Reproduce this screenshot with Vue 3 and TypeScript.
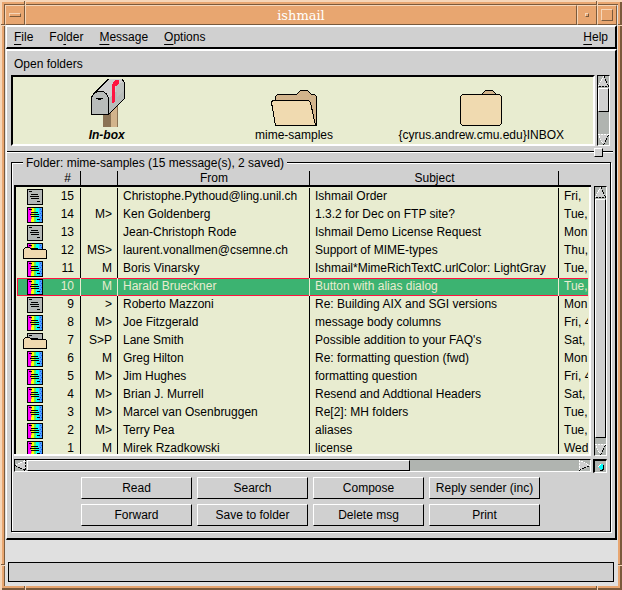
<script setup lang="ts">
import { ref } from 'vue'

interface Message {
  id: number
  icon: 'plain' | 'rich' | 'savedRich' | 'savedPlain'
  flags: string
  from: string
  subject: string
  date: string
}

const menus = [
  { before: '', key: 'F', after: 'ile' },
  { before: 'Fo', key: 'l', after: 'der' },
  { before: '', key: 'M', after: 'essage' },
  { before: '', key: 'O', after: 'ptions' },
  { before: '', key: 'H', after: 'elp' },
]

const messages: Message[] = [
  { id: 15, icon: 'plain', flags: '', from: 'Christophe.Pythoud@ling.unil.ch', subject: 'Ishmail Order', date: 'Fri,' },
  { id: 14, icon: 'rich', flags: 'M>', from: 'Ken Goldenberg', subject: '1.3.2 for Dec on FTP site?', date: 'Tue,' },
  { id: 13, icon: 'plain', flags: '', from: 'Jean-Christoph Rode', subject: 'Ishmail Demo License Request', date: 'Mon' },
  { id: 12, icon: 'savedRich', flags: 'MS>', from: 'laurent.vonallmen@csemne.ch', subject: 'Support of MIME-types', date: 'Thu,' },
  { id: 11, icon: 'rich', flags: 'M', from: 'Boris Vinarsky', subject: 'Ishmail*MimeRichTextC.urlColor: LightGray', date: 'Tue,' },
  { id: 10, icon: 'rich', flags: 'M', from: 'Harald Brueckner', subject: 'Button with alias dialog', date: 'Tue,' },
  { id: 9, icon: 'plain', flags: '>', from: 'Roberto Mazzoni', subject: 'Re: Building AIX and SGI versions', date: 'Mon' },
  { id: 8, icon: 'rich', flags: 'M>', from: 'Joe Fitzgerald', subject: 'message body columns', date: 'Fri, 4' },
  { id: 7, icon: 'savedPlain', flags: 'S>P', from: 'Lane Smith', subject: "Possible addition to your FAQ's", date: 'Sat,' },
  { id: 6, icon: 'rich', flags: 'M', from: 'Greg Hilton', subject: 'Re: formatting question (fwd)', date: 'Mon' },
  { id: 5, icon: 'rich', flags: 'M>', from: 'Jim Hughes', subject: 'formatting question', date: 'Fri, 4' },
  { id: 4, icon: 'rich', flags: 'M>', from: 'Brian J. Murrell', subject: 'Resend and Addtional Headers', date: 'Sat,' },
  { id: 3, icon: 'rich', flags: 'M>', from: 'Marcel van Osenbruggen', subject: 'Re[2]: MH folders', date: 'Tue,' },
  { id: 2, icon: 'rich', flags: 'M>', from: 'Terry Pea', subject: 'aliases', date: 'Tue,' },
  { id: 1, icon: 'rich', flags: 'M', from: 'Mirek Rzadkowski', subject: 'license', date: 'Wed' },
]

const actions = ['Read', 'Search', 'Compose', 'Reply sender (inc)', 'Forward', 'Save to folder', 'Delete msg', 'Print']
const selected = ref(10)
</script>

<template>
  <div class="window">
    <i class="tick v top left"></i><i class="tick v top right"></i>
    <i class="tick v bottom left"></i><i class="tick v bottom right"></i>
    <i class="tick h up west"></i><i class="tick h up east"></i>
    <i class="tick h down west"></i><i class="tick h down east"></i>

    <header class="titlebar">
      <button class="wm" aria-label="Window menu"><span class="glyph dash"></span></button>
      <h1 class="title">ishmail</h1>
      <button class="wm" aria-label="Minimize"><span class="glyph dot"></span></button>
      <button class="wm" aria-label="Maximize"><span class="glyph square"></span></button>
    </header>

    <nav class="menubar">
      <button v-for="m in menus" :key="m.key" class="menu">{{ m.before }}<span class="mnemonic">{{ m.key }}</span>{{ m.after }}</button>
    </nav>

    <main class="panel">
      <h2 class="label">Open folders</h2>
      <div class="folders">
        <div class="folder-view">
          <button class="folder current">
            <svg width="36" height="48" viewBox="-2 0 36 48" shape-rendering="crispEdges">
              <path d="M12 34h8v14h-8z" fill="#8b7355" />
              <path d="M20 30l7-5v23h-7z" fill="#d2b48c" />
              <path d="M26 25h1v23h-1z" fill="#8b7355" />
              <path d="M1 16L17 0H31L34 4V19L18 35H1z" fill="#b8bcba" />
              <path d="M3 14L17 0H31L33 4L18 20L16 15L13 13H6z" fill="#cfcfcf" />
              <path d="M25 7l8-5v9l-7 7z" fill="#bfc3c0" />
              <path d="M0.500 35.500V18L4 13.500L7 12.500H12L15.500 15L17.500 19V35.500z" fill="#b8bcba" stroke="#000" />
              <path d="M2.500 15L17.500 0M31.500 0.500L33.500 4V19.500L17.500 35.500" fill="none" stroke="#000" />
              <path d="M5 19h7v1H5zM7 20h3v1H7z" />
              <path d="M21 5h1V3h1V2h1V1h4v4h-1v1h-1v1h-2v16h-1v1h-2z" fill="#ff1440" />
            </svg>
            <span>In-box</span>
          </button>
          <button class="folder">
            <svg width="48" height="48" viewBox="0 0 48 48" shape-rendering="crispEdges">
              <path d="M5.500 46V17.500L7.500 15.500H26.500L30.500 11.500H37.500L41.500 15.500H44.500L46.500 17.500V46.500z" fill="#d2b48c" stroke="#000" />
              <path d="M1.500 23.500L2.500 21.500H38.500L40.500 23.500L45.500 46.500H5.500z" fill="#f0dab0" stroke="#000" />
            </svg>
            <span>mime-samples</span>
          </button>
          <button class="folder">
            <svg width="44" height="48" viewBox="0 0 44 48" shape-rendering="crispEdges">
              <path d="M22.500 15.500L26.500 11.500H33.500L37.500 15.500z" fill="#d2b48c" stroke="#000" />
              <path d="M3.500 15.500H40.500L42.500 17.500V44.500L40.500 46.500H3.500L1.500 44.500V17.500z" fill="#f0dab0" stroke="#000" />
            </svg>
            <span>{cyrus.andrew.cmu.edu}INBOX</span>
          </button>
        </div>
        <div class="scroll vertical">
          <button class="arrow" aria-label="Scroll folders up">
            <svg width="11" height="11" viewBox="0 0 11 11" shape-rendering="crispEdges"><path d="M5 0h1L11 10H0z" fill="#d0d0d0" /><path d="M5.500 0L0.500 10" stroke="#fff" stroke-dasharray="1 1" /><path d="M6 0l4.500 10H0" fill="none" stroke="#000" stroke-dasharray="2 1" /></svg>
          </button>
          <div class="thumb short"></div>
          <div class="trough"></div>
          <button class="arrow" aria-label="Scroll folders down">
            <svg width="11" height="11" viewBox="0 0 11 11" shape-rendering="crispEdges"><path d="M0 0h11L6 10H5z" fill="#d0d0d0" /><path d="M11 0.500H0.500L5 10" fill="none" stroke="#fff" stroke-dasharray="2 1" /><path d="M10.500 1L5.500 11" stroke="#000" stroke-dasharray="2 1" /></svg>
          </button>
        </div>
      </div>

      <div class="sash"><span class="grip"></span></div>

      <section class="group">
        <h2 class="group-title">Folder: mime-samples (15 message(s), 2 saved)</h2>
        <div class="list">
          <div class="list-view">
            <table>
              <colgroup><col class="c-num"><col class="c-flags"><col class="c-from"><col><col class="c-date"></colgroup>
              <thead>
                <tr><th class="num">#</th><th></th><th>From</th><th>Subject</th><th></th></tr>
              </thead>
              <tbody>
                <tr v-for="m in messages" :key="m.id" :class="{ selected: m.id === selected }" @click="selected = m.id">
                  <td>
                    <div class="cell-num">
                      <svg width="24" height="16" viewBox="0 0 24 16" shape-rendering="crispEdges">
                        <rect x="4.500" y="0.500" width="15" height="15" fill="#b4b8b6" stroke="#000" />
                        <template v-if="m.icon === 'rich' || m.icon === 'savedRich'">
                          <path d="M5 1h3v14H5z" fill="#ff00ff" />
                          <path d="M8 1h3v14H8z" fill="#ffff00" />
                          <path d="M8 2h1v2H8zM8 6h1v2H8zM8 10h1v2H8z" fill="#ff8040" />
                          <path d="M11 1h2v14h-2z" fill="#60f060" />
                          <path d="M13 1h3v14h-3z" fill="#00ffff" />
                          <path d="M16 1h3v14h-3z" fill="#4aa8ff" />
                          <path d="M17 2h1v1h-1zM18 4h1v1h-1zM17 6h1v1h-1zM18 8h1v1h-1zM17 10h1v1h-1zM18 12h1v1h-1z" fill="#2050ff" />
                        </template>
                        <path d="M6 2h3v1H6zM8 5h7v1H8zM7 7h9v1H7zM8 9h8v1H8zM14 12h3v1h-3z" />
                        <path v-if="m.icon.startsWith('saved')" d="M0.500 6.500L2.500 4.500H6.500L8.500 6.500H22L23.500 7.500V15.500H0.500z" fill="#f0dab0" stroke="#000" />
                      </svg>
                      <span>{{ m.id }}</span>
                    </div>
                  </td>
                  <td class="flags">{{ m.flags }}</td>
                  <td>{{ m.from }}</td>
                  <td>{{ m.subject }}</td>
                  <td>{{ m.date }}</td>
                </tr>
              </tbody>
            </table>
          </div>
          <div class="scroll vertical list-scroll">
            <button class="arrow" aria-label="Scroll messages up">
              <svg width="11" height="11" viewBox="0 0 11 11" shape-rendering="crispEdges"><path d="M5 0h1L11 10H0z" fill="#d0d0d0" /><path d="M5.500 0L0.500 10" stroke="#fff" stroke-dasharray="1 1" /><path d="M6 0l4.500 10H0" fill="none" stroke="#000" stroke-dasharray="2 1" /></svg>
            </button>
            <div class="thumb long"></div>
            <div class="trough"></div>
            <button class="arrow" aria-label="Scroll messages down">
              <svg width="11" height="11" viewBox="0 0 11 11" shape-rendering="crispEdges"><path d="M0 0h11L6 10H5z" fill="#d0d0d0" /><path d="M11 0.500H0.500L5 10" fill="none" stroke="#fff" stroke-dasharray="2 1" /><path d="M10.500 1L5.500 11" stroke="#000" stroke-dasharray="2 1" /></svg>
            </button>
          </div>
          <div class="scroll horizontal">
            <button class="arrow" aria-label="Scroll messages left">
              <svg width="11" height="11" viewBox="0 0 11 11" shape-rendering="crispEdges"><path d="M0 5h1L11 0V11z" fill="#d0d0d0" /><path d="M0 5.500L10.500 0.500" stroke="#fff" stroke-dasharray="2 1" /><path d="M0 5.500L10.500 10.500V0" fill="none" stroke="#000" stroke-dasharray="2 1" /></svg>
            </button>
            <div class="thumb wide"></div>
            <div class="trough"></div>
            <button class="arrow" aria-label="Scroll messages right">
              <svg width="11" height="11" viewBox="0 0 11 11" shape-rendering="crispEdges"><path d="M0 0L11 5v1L0 11z" fill="#d0d0d0" /><path d="M0.500 11V0.500L11 5.500" fill="none" stroke="#fff" stroke-dasharray="2 1" /><path d="M0 10.500L11 5.500" stroke="#000" stroke-dasharray="2 1" /></svg>
            </button>
          </div>
          <button class="plug" aria-label="Lock position">
            <svg width="8" height="8" viewBox="0 0 8 8" shape-rendering="crispEdges"><path d="M5 2h2v5H6v1H3V7h2z" /><path d="M3 1h3v5H5v1H4V6H3V5H2V4H1V3h1V2h1z" fill="#00ffff" /><path d="M1 3h1V2h1V1h1v1H3v1H2v1H1z" fill="#fff" /></svg>
          </button>
        </div>
        <div class="actions">
          <button v-for="a in actions" :key="a" class="action">{{ a }}</button>
        </div>
      </section>
    </main>

    <div class="status" role="status"></div>
  </div>
</template>

<style>
body {
  margin: 0;
}
</style>

<style scoped>
.window {
  --gray: #d0d0d0;
  --cream: #e8ecd0;
  --orange: #e8a670;
  --brown: #7a5a3c;
  --peach: #f6d6b8;
  --trough: #b0b4b0;
  position: relative;
  box-sizing: border-box;
  display: flex;
  flex-direction: column;
  height: 100vh;
  min-height: 420px;
  padding: 5px 5px 4px;
  background: #e0e0e0;
  box-shadow:
    inset 2px 2px var(--peach),
    inset -2px -2px var(--brown),
    inset 4px 4px var(--orange),
    inset -4px -4px var(--orange),
    inset 5px 5px var(--brown);
  font: 12px/18px "Liberation Sans", Arial, sans-serif;
  color: #000;
}

button {
  margin: 0;
  padding: 0;
  border: 0;
  background: none;
  font: inherit;
  color: inherit;
}

h1,
h2 {
  margin: 0;
  font-weight: normal;
}

svg {
  display: block;
  flex: none;
}

.tick {
  position: absolute;
}

.v {
  width: 1px;
  height: 4px;
  border-left: 1px solid var(--brown);
  background: var(--peach);
}

.h {
  width: 4px;
  height: 1px;
  border-top: 1px solid var(--brown);
  background: var(--peach);
}

.top { top: 1px; }
.bottom { bottom: 0; }
.left { left: 24px; }
.right { right: 24px; }
.up { top: 24px; }
.down { bottom: 24px; }
.west { left: 1px; }
.east { right: 0; }

.titlebar {
  display: flex;
  flex: none;
  height: 20px;
  background: var(--orange);
}

.wm,
.title {
  box-sizing: border-box;
  border: 1px solid;
  border-color: var(--peach) var(--brown) var(--brown) var(--peach);
}

.wm {
  display: flex;
  align-items: center;
  justify-content: center;
  width: 20px;
}

.title {
  flex: 1;
  font: 13px/20px "DejaVu Serif", serif;
  color: #fff;
  text-align: center;
}

.glyph {
  box-sizing: border-box;
  border: 1px solid;
  border-color: var(--peach) var(--brown) var(--brown) var(--peach);
}

.dash { width: 12px; height: 4px; }
.dot { width: 4px; height: 4px; }
.square { width: 12px; height: 12px; }

.menubar {
  display: flex;
  flex: none;
  gap: 16px;
  height: 20px;
  margin: 0 0 0 1px;
  padding: 0 7px;
  border: solid;
  border-width: 2px 2px 2px 1px;
  border-color: #fff #000 #000 #fff;
  background: var(--gray);
}

.menu:last-child {
  margin-left: auto;
}

.mnemonic {
  text-decoration: underline;
  text-underline-offset: 3px;
}

.panel {
  display: flex;
  flex: 1;
  flex-direction: column;
  min-height: 0;
  margin-left: 1px;
  padding: 4px 4px 6px;
  border: solid;
  border-width: 2px 2px 2px 1px;
  border-color: #fff #000 #000 #fff;
  background: var(--gray);
}

.label {
  padding: 0 3px 2px;
  font-size: 12px;
}

.folders {
  display: flex;
  gap: 2px;
  padding-right: 1px;
}

.folder-view {
  display: grid;
  flex: 1;
  grid-template-columns: repeat(3, 1fr);
  box-sizing: border-box;
  height: 71px;
  padding: 2px 18px 0 0;
  border: 2px solid;
  border-color: #000 #fff #fff #000;
  background: var(--cream);
}

.folder {
  display: flex;
  flex-direction: column;
  align-items: center;
  line-height: 16px;
}

.current {
  font-weight: bold;
  font-style: italic;
}

.scroll {
  display: flex;
  box-sizing: border-box;
  border: 1px solid;
  border-color: #000 #fff #fff #000;
  background: var(--trough);
}

.vertical {
  flex-direction: column;
  width: 13px;
}

.horizontal {
  height: 13px;
}

.arrow {
  flex: none;
  width: 11px;
  height: 11px;
}

.thumb {
  box-sizing: border-box;
  border: 1px solid;
  border-color: #fff #000 #000 #fff;
  background: var(--gray);
}

.short { flex: 22; margin-top: 1px; }
.short + .trough { flex: 23; }
.long { flex: 239; margin-top: 1px; }
.long + .trough { flex: 6; }
.wide { flex: 382; margin-left: 1px; }
.wide + .trough { flex: 170; }

.sash {
  display: flex;
  align-items: center;
  justify-content: flex-end;
  height: 9px;
  margin: 2px -2px 0 -4px;
  padding-right: 10px;
  background: linear-gradient(#000 50%, #fff 50%) 0 3px / 100% 2px no-repeat;
}

.grip {
  box-sizing: border-box;
  width: 9px;
  height: 9px;
  border: 1px solid;
  border-color: #fff #000 #000 #fff;
  background: var(--gray);
}

.group {
  display: flex;
  flex: 1;
  flex-direction: column;
  min-height: 0;
  margin-top: 5px;
  padding: 0 3px 5px 2px;
  border: 1px solid #000;
  box-shadow: inset 1px 1px #fff, 1px 1px #fff;
}

.group-title {
  align-self: flex-start;
  height: 14px;
  margin: -7px 0 1px 9px;
  padding: 0 3px;
  background: var(--gray);
  font-size: 12px;
  line-height: 14px;
}

.list {
  display: grid;
  flex: 1;
  grid-template: minmax(0, 1fr) 13px / minmax(0, 1fr) 14px;
  gap: 3px 2px;
  min-height: 0;
}

.list-view {
  overflow: hidden;
  padding: 0 3px;
  border-bottom: 2px solid #fff;
  background:
    linear-gradient(#000, #000) 0 14px / 2px 100% no-repeat,
    linear-gradient(#000, #000) 0 14px / 100% 2px no-repeat,
    linear-gradient(#fff, #fff) 100% 14px / 2px 100% no-repeat,
    linear-gradient(var(--cream), var(--cream)) 0 14px no-repeat;
}

.list-scroll {
  justify-self: end;
  margin-top: 15px;
}

table {
  width: 100%;
  table-layout: fixed;
  border-collapse: separate;
  border-spacing: 0;
}

.c-num { width: 64px; }
.c-flags { width: 37px; }
.c-from { width: 192px; }
.c-date { width: 29px; }

th {
  height: 14px;
  padding: 0 0 3px;
  font-weight: normal;
  line-height: 14px;
  background: linear-gradient(#000, #000) 100% 0 / 1px 14px no-repeat;
}

th.num {
  padding-right: 10px;
  text-align: right;
}

td {
  box-sizing: border-box;
  height: 18px;
  padding: 0 0 0 5px;
  overflow: hidden;
  border-right: 1px solid #000;
  line-height: 16px;
  vertical-align: top;
  white-space: nowrap;
}

th:last-child {
  background: none;
}

td:last-child {
  border-right: 0;
}

td:first-child {
  padding-left: 5px;
}

.cell-num {
  display: flex;
  justify-content: space-between;
  padding: 1px 6px 0 1px;
}

.cell-num span {
  margin-top: -1px;
}

.flags {
  padding: 0 5px 0 0;
  text-align: right;
}

.selected td {
  border-right-color: var(--cream);
  background: #3cb371;
  box-shadow: inset 0 1px #ff1440, inset 0 -1px #ff1440;
  color: var(--cream);
}

.selected td:first-child {
  box-shadow: inset 1px 1px #ff1440, inset 0 -1px #ff1440;
}

.plug {
  display: grid;
  place-items: center;
  box-sizing: border-box;
  width: 14px;
  height: 14px;
  border: solid;
  border-width: 2px 1px 1px 2px;
  border-color: #000 #fff #fff #000;
  background: var(--trough);
}

.actions {
  display: grid;
  grid-template-columns: repeat(4, minmax(0, 111px));
  gap: 5px;
  justify-content: center;
  margin-top: 5px;
}

.action {
  height: 22px;
  border: 1px solid;
  border-color: #fff #000 #000 #fff;
}

.status {
  box-sizing: border-box;
  flex: none;
  height: 20px;
  margin: 22px 3px 4px;
  border: 1px solid #000;
  background: var(--gray);
}
</style>
